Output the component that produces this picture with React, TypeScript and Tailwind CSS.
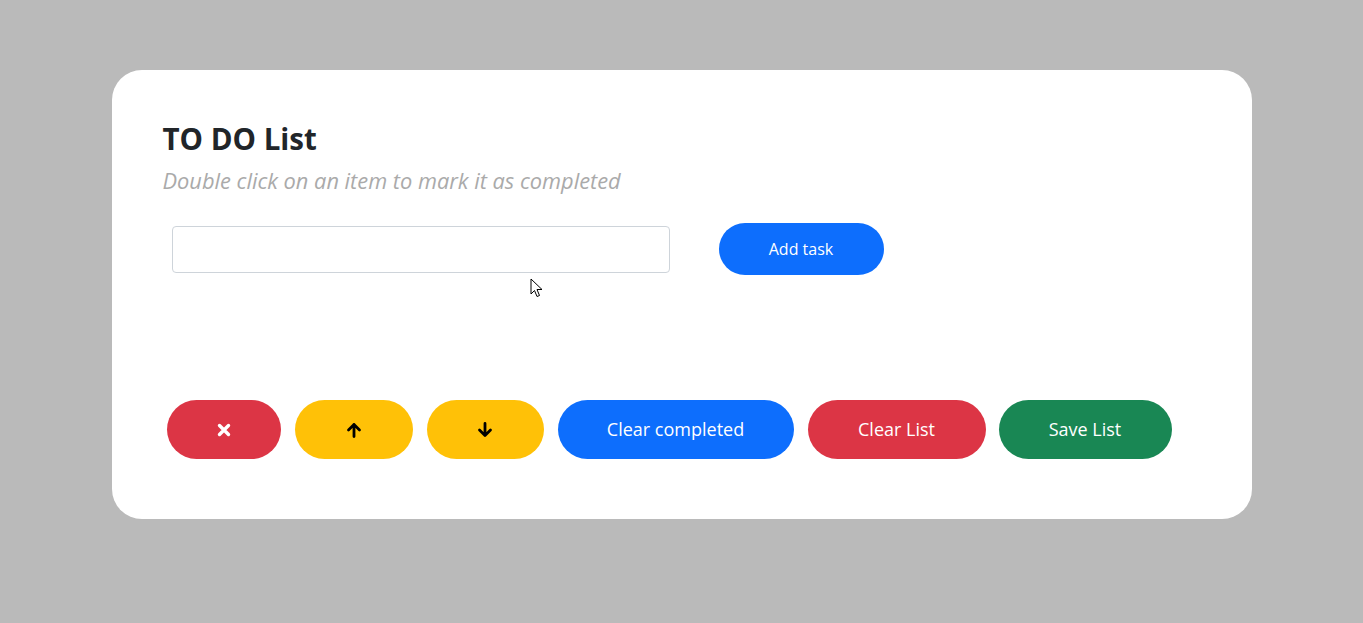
const font = { fontFamily: '"Open Sans", "Noto Sans", sans-serif' };

function Pill({ className, children }: { className: string; children: React.ReactNode }) {
  return (
    <button
      type="button"
      className={`flex h-[59px] items-center justify-center rounded-full text-[18px] ${className}`}
    >
      {children}
    </button>
  );
}

function XIcon() {
  return (
    <svg width="14" height="14" viewBox="0 0 14 14" fill="none" stroke="currentColor" strokeWidth="3.4" strokeLinecap="round">
      <path d="M2.5 2.5 L11.5 11.5 M11.5 2.5 L2.5 11.5" />
    </svg>
  );
}

function ArrowIcon({ down }: { down?: boolean }) {
  return (
    <svg
      width="16"
      height="16"
      viewBox="0 0 16 16"
      fill="none"
      stroke="currentColor"
      strokeWidth="2.8"
      strokeLinecap="round"
      strokeLinejoin="round"
      className={down ? "rotate-180" : ""}
    >
      <path d="M8 14.5 V2.5 M2.5 8 L8 2.5 L13.5 8" />
    </svg>
  );
}

export default function App() {
  return (
    <div className="min-h-[623px] bg-[#bababa] pt-[70px]" style={font}>
      <div className="relative mx-auto flex w-[1140px] flex-col rounded-[30px] bg-white pb-[60px] pl-[51px] pt-[50px]">
        <h2 className="text-[29.5px] font-bold leading-[38px] text-[#212529]">TO DO List</h2>
        <p className="mt-[8px] text-[21.8px] italic leading-[30px] text-[#aaaaaa]">
          Double click on an item to mark it as completed
        </p>

        <div className="ml-[9px] mt-[27px] flex items-center gap-[49px]">
          <input
            type="text"
            className="h-[47px] w-[498px] rounded-[4px] border border-[#ced4da] px-3 outline-none"
          />
          <button
            type="button"
            className="h-[52px] w-[165px] rounded-full bg-[#0d6efd] text-[16px] text-white"
          >
            Add task
          </button>
        </div>

        <div className="ml-[4px] mt-[125px] flex gap-[14px]">
          <Pill className="w-[114px] bg-[#dc3545] text-white">
            <XIcon />
          </Pill>
          <Pill className="w-[118px] bg-[#ffc107] text-black">
            <ArrowIcon />
          </Pill>
          <Pill className="w-[117px] bg-[#ffc107] text-black">
            <ArrowIcon down />
          </Pill>
          <Pill className="w-[236px] bg-[#0d6efd] text-white">Clear completed</Pill>
          <Pill className="w-[178px] bg-[#dc3545] text-white">Clear List</Pill>
          <Pill className="-ml-px w-[173px] bg-[#198754] text-white">Save List</Pill>
        </div>

        <svg
          className="absolute left-[418px] top-[208px]"
          width="13"
          height="20"
          viewBox="0 0 13 20"
        >
          <path d="M1 1 L1 16 L4.5 12.5 L7 18.5 L9.5 17.5 L7 11.5 L12 11.5 Z" fill="white" stroke="black" strokeWidth="1" />
        </svg>
      </div>
    </div>
  );
}
